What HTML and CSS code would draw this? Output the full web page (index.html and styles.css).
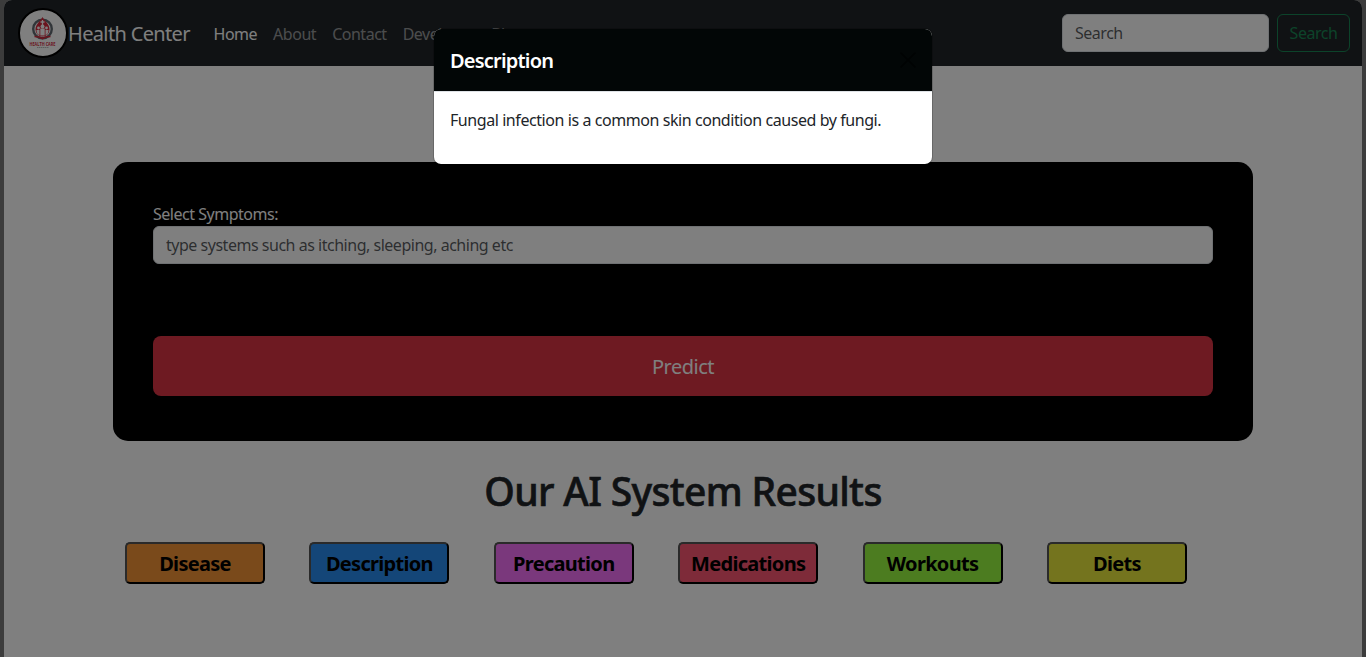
FILE: index.html
```html
<!DOCTYPE html>
<html lang="en">
<head>
<meta charset="utf-8">
<title>Health Center</title>
<link rel="stylesheet" href="styles.css">
</head>
<body>
<div class="page">
  <nav class="navbar">
    <svg class="logo" viewBox="0 0 50 50">
      <circle cx="25" cy="25" r="24" fill="#fff" stroke="#000" stroke-width="2"/>
      <circle cx="24.500" cy="21" r="9.300" fill="none" stroke="#626a72" stroke-width="2.400"/>
      <path d="M24.500 9c2 4 7 7 7 12.500a7 7 0 0 1-14 0c0-5.500 5-8.500 7-12.500z" fill="#d5283c"/>
      <path d="M24.500 12v5M22.500 14h4" stroke="#fff" stroke-width="1.300"/>
      <circle cx="24.500" cy="18.500" r="2" fill="#fff"/>
      <circle cx="20.500" cy="20" r="1.400" fill="#fff"/>
      <circle cx="28.500" cy="20" r="1.400" fill="#fff"/>
      <path d="M22.300 20.500h4.400v7h-4.400zM18.500 22h3v5c-2 0-3-2.500-3-5zM27.500 22h3c0 2.500-1 5-3 5z" fill="#fff"/>
      <path d="M16.500 28.500c3.500 0 6 .5 8 2 2-1.500 4.500-2 8-2" fill="none" stroke="#d5283c" stroke-width="1.600"/>
      <text x="24.500" y="37.500" text-anchor="middle" textLength="26" lengthAdjust="spacingAndGlyphs" class="logo-name">HEALTH CARE</text>
      <path d="M19 39.500h12" stroke="#aaa" stroke-width=".8" stroke-dasharray="1.500 .5"/>
    </svg>
    <a class="brand">Health Center</a>
    <div class="links">
      <a class="link active">Home</a>
      <a class="link">About</a>
      <a class="link">Contact</a>
      <a class="link">Developer</a>
      <a class="link">Blog</a>
    </div>
    <form class="search">
      <input class="field search-field" placeholder="Search">
      <button type="button" class="search-btn">Search</button>
    </form>
  </nav>
  <main class="container">
    <form class="symptoms">
      <label class="label">Select Symptoms:</label>
      <input class="field symptoms-field" placeholder="type systems such as itching, sleeping, aching etc">
      <button type="button" class="predict">Predict</button>
    </form>
    <h1 class="heading">Our AI System Results</h1>
    <div class="results">
      <button class="result disease">Disease</button>
      <button class="result description">Description</button>
      <button class="result precaution">Precaution</button>
      <button class="result medications">Medications</button>
      <button class="result workouts">Workouts</button>
      <button class="result diets">Diets</button>
    </div>
  </main>
</div>
<div class="backdrop">
  <section class="modal">
    <header class="modal-header">
      <h2 class="modal-title">Description</h2>
      <svg class="close" viewBox="0 0 16 16"><path d="M1 1l14 14M15 1L1 15" stroke="#000" stroke-width="1.600" stroke-linecap="round"/></svg>
    </header>
    <p class="modal-body">Fungal infection is a common skin condition caused by fungi.</p>
  </section>
</div>
</body>
</html>
```
FILE: styles.css
```css
* { box-sizing: border-box; }
body {
  margin: 0;
  height: 657px;
  overflow: hidden;
  padding: 0 4px;
  background: #787878;
  font: 16px/24px "Noto Sans", "Open Sans", sans-serif;
  letter-spacing: -.48px;
  color: #212529;
}
input, button { font: inherit; letter-spacing: inherit; }
.page { height: 657px; background: #fff; border-radius: 8px 8px 0 0; overflow: hidden; }
.navbar {
  height: 66px;
  display: flex;
  align-items: center;
  padding: 0 12px 0 14px;
  background: #212529;
}
.logo { width: 50px; height: 50px; flex: none; }
.logo-name { font: bold 4.500px "Open Sans", sans-serif; fill: #d5283c; letter-spacing: 0; }
.brand { width: 137.500px; padding-top: 2px; color: #fff; font-size: 20px; line-height: 30px; letter-spacing: -.65px; white-space: nowrap; }
.links { display: flex; flex: 1; padding-top: 1px; }
.link { padding: 8px; color: rgba(255,255,255,.55); }
.link.active { color: #fff; }
.search { display: flex; gap: 8px; }
.field {
  height: 38px;
  padding: 6px 12px;
  background: #fff;
  border: 1px solid #dee2e6;
  border-radius: 6px;
}
.field::placeholder { color: rgba(33,37,41,.75); opacity: 1; }
.search-field { width: 207px; }
.search-btn {
  width: 73px;
  height: 38px;
  padding: 0;
  background: none;
  border: 1px solid #198754;
  border-radius: 6px;
  color: #198754;
}
.container { width: 1140px; margin: 96px auto 0; }
.symptoms {
  display: flex;
  flex-direction: column;
  height: 279px;
  padding: 40px;
  background: #000;
  border-radius: 15px;
}
.label { color: #fff; }
.symptoms-field { width: 100%; }
.predict {
  height: 60px;
  margin-top: 72px;
  padding: 2px 0 0;
  border: 0;
  border-radius: 8px;
  background: #dc3545;
  color: #fff;
  font-size: 20px;
}
.heading {
  margin: 26px 0 27px;
  text-align: center;
  font-size: 39px;
  line-height: 48px;
  font-weight: 500;
  letter-spacing: -.67px;
  -webkit-text-stroke: .6px #212529;
}
.results { display: grid; grid-template-columns: repeat(6, 184.400px); padding-left: 12px; }
.result {
  width: 140px;
  height: 42px;
  padding: 2px 0 0;
  border: 2px outset #000;
  border-radius: 5px;
  color: #000;
  font-size: 20px;
  font-weight: 700;
  letter-spacing: -.7px;
}
.disease { background: #f49436; }
.description { background: #288cf0; }
.precaution { background: #f470f8; }
.medications { background: #fc5672; }
.workouts { background: #98f840; }
.diets { background: #e8e83c; }
.backdrop { position: absolute; inset: 0; background: rgba(0,0,0,.5); }
.modal {
  width: 500px;
  margin: 28px auto 0;
  background: #fff;
  background-clip: padding-box;
  border: 1px solid rgba(0,0,0,.175);
  border-radius: 8px;
}
.modal-header {
  display: flex;
  justify-content: space-between;
  height: 63px;
  padding: 16px;
  background: #020606;
  border-bottom: 1px solid #dee2e6;
  border-radius: 7px 7px 0 0;
}
.modal-title { margin: 1px 0 0; font-size: 20px; line-height: 30px; font-weight: 600; letter-spacing: -.8px; color: #fff; }
.close { width: 16px; height: 16px; margin: 7px 0 0; opacity: .5; }
.modal-body { margin: 0; padding: 16px 16px 32px; letter-spacing: -.43px; }
```
